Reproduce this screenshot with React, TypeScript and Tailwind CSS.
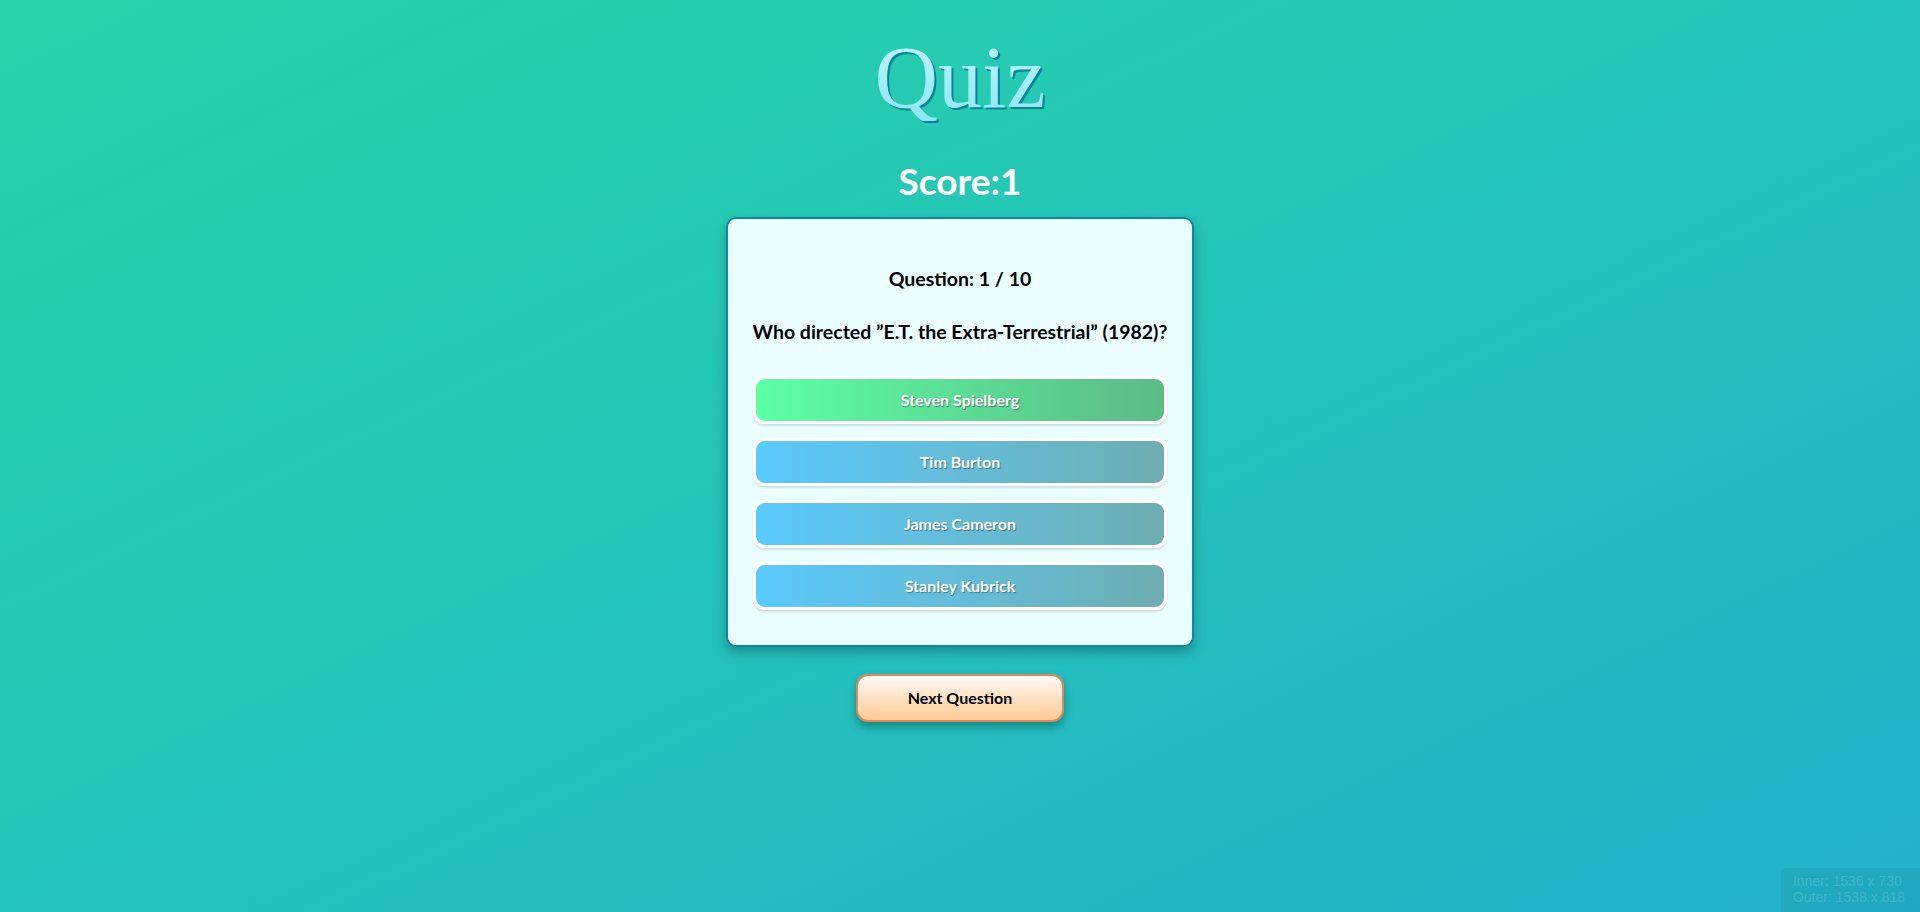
import React from "react";

const answers = [
  { text: "Steven Spielberg", correct: true },
  { text: "Tim Burton", correct: false },
  { text: "James Cameron", correct: false },
  { text: "Stanley Kubrick", correct: false },
];

export default function App() {
  return (
    <div className="relative min-h-screen w-full bg-[linear-gradient(to_bottom_right,#27d4a8,#22b2cb)] font-['Lato',sans-serif] flex flex-col items-center">
      <h1 className="mt-[35px] h-[86px] text-[88px] leading-[86px] font-['Liberation_Serif',serif] font-normal bg-[linear-gradient(to_bottom,#bdf7ff,#8de6f3)] bg-clip-text text-transparent drop-shadow-[2px_2px_0_#0b8299]">
        Quiz
      </h1>
      <div className="mt-[40px] text-[37px] leading-[40px] font-bold text-white">Score:1</div>
      <div className="mt-[16px] w-[468px] rounded-[10px] border-2 border-[#0b8a9e] bg-[#ebfeff] shadow-[0_6px_12px_rgba(0,0,0,0.25)] px-[25px] pt-[48px] pb-[35px] flex flex-col items-center">
        <div className="text-[19.5px] leading-[24px] font-bold text-black">Question: 1 / 10</div>
        <div className="mt-[29px] text-[19.5px] leading-[24px] font-bold text-black whitespace-nowrap">
          Who directed ”E.T. the Extra-Terrestrial” (1982)?
        </div>
        <div className="mt-[32px] w-full flex flex-col gap-[14px]">
          {answers.map((a) => (
            <button
              key={a.text}
              className={
                "h-[48px] w-full rounded-[12px] border-[3px] border-white text-white text-[16px] font-bold [text-shadow:1px_1px_1px_rgba(0,0,0,0.35)] shadow-[0_2px_2px_rgba(0,0,0,0.12)] " +
                (a.correct
                  ? "bg-[linear-gradient(to_right,#5cffa6,#5cbb86)]"
                  : "bg-[linear-gradient(to_right,#5acafd,#6eaeb2)]")
              }
            >
              {a.text}
            </button>
          ))}
        </div>
      </div>
      <button className="mt-[27px] h-[48px] w-[208px] rounded-[12px] border-2 border-[#d9895a] bg-[linear-gradient(to_bottom,#fffaf5,#ffca94)] text-[16px] font-bold text-black shadow-[0_5px_10px_rgba(0,0,0,0.3)]">
        Next Question
      </button>
      <div className="fixed bottom-0 right-0 w-[139px] h-[44px] rounded-tl-[5px] bg-[rgba(0,0,0,0.05)] pl-[12px] pt-[5px] font-['Liberation_Sans',sans-serif] text-[14px] leading-[16px] text-[rgba(255,255,255,0.14)]">
        <div>Inner: 1536 x 730</div>
        <div>Outer: 1538 x 818</div>
      </div>
    </div>
  );
}
